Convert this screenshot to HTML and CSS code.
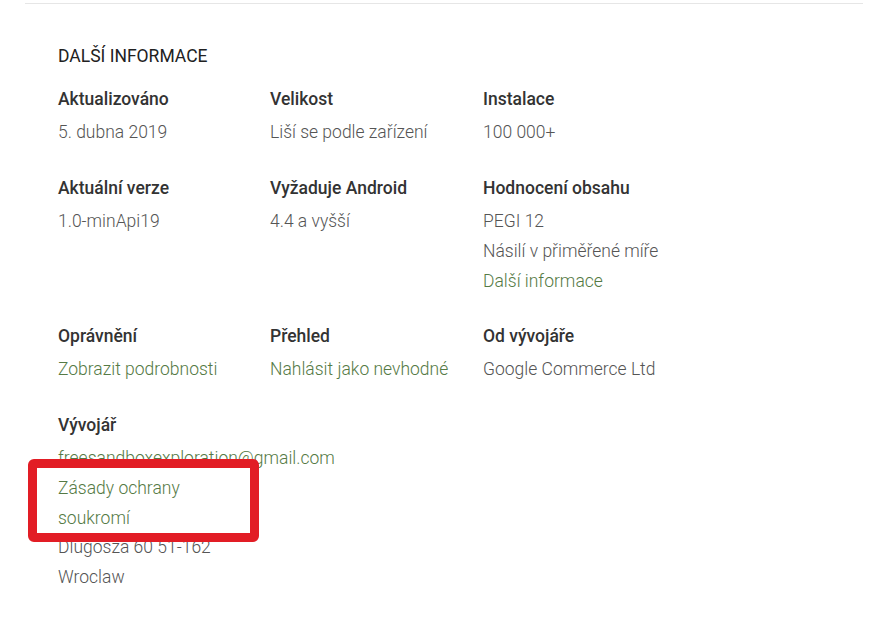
FILE: index.html
```html
<!DOCTYPE html>
<html lang="cs">
<head>
    <meta charset="UTF-8">
    <meta name="viewport" content="width=device-width, initial-scale=1.0">
    <title>Další informace</title>
    <link rel="stylesheet" href="styles.css">
</head>
<body>
    <div class="section">
        <h2 class="section-title">DALŠÍ INFORMACE</h2>

        <div class="info-grid">
            <div class="info-item">
                <div class="info-label">Aktualizováno</div>
                <div class="info-value">5. dubna 2019</div>
            </div>
            <div class="info-item">
                <div class="info-label">Velikost</div>
                <div class="info-value">Liší se podle zařízení</div>
            </div>
            <div class="info-item">
                <div class="info-label">Instalace</div>
                <div class="info-value">100 000+</div>
            </div>

            <div class="info-item">
                <div class="info-label">Aktuální verze</div>
                <div class="info-value">1.0-minApi19</div>
            </div>
            <div class="info-item">
                <div class="info-label">Vyžaduje Android</div>
                <div class="info-value">4.4 a vyšší</div>
            </div>
            <div class="info-item">
                <div class="info-label">Hodnocení obsahu</div>
                <div class="info-value">PEGI 12</div>
                <div class="info-value">Násilí v přiměřené míře</div>
                <a class="info-value link" href="#">Další informace</a>
            </div>

            <div class="info-item">
                <div class="info-label">Oprávnění</div>
                <a class="info-value link" href="#">Zobrazit podrobnosti</a>
            </div>
            <div class="info-item">
                <div class="info-label">Přehled</div>
                <a class="info-value link" href="#">Nahlásit jako nevhodné</a>
            </div>
            <div class="info-item">
                <div class="info-label">Od vývojáře</div>
                <div class="info-value">Google Commerce Ltd</div>
            </div>

            <div class="info-item">
                <div class="info-label">Vývojář</div>
                <a class="info-value link nowrap" href="#">freesandboxexploration@gmail.com</a>
                <!-- red annotation box around the privacy link -->
                <a class="info-value link highlight" href="#">Zásady ochrany soukromí</a>
                <div class="info-value">Dlugosza 60 51-162</div>
                <div class="info-value">Wroclaw</div>
            </div>
        </div>
    </div>
</body>
</html>
```

FILE: styles.css
```css
body {
    margin: 0;
    background: #fff;
    font-family: Roboto, "Noto Sans", Arial, sans-serif;
    color: #333;
}

.section {
    margin: 3px 30px 0 25px;
    border-top: 1px solid #e6e6e6;
    padding: 0 33px;
}

.section-title {
    margin: 40px 0 0;
    font-size: 17.5px;
    font-weight: 400;
    line-height: 24px;
    color: #212121;
}

.info-grid {
    display: grid;
    grid-template-columns: 212px 213px 213px;
    row-gap: 28.5px;
    margin-top: 19px;
}

.info-label {
    font-size: 17.5px;
    font-weight: 500;
    line-height: 24px;
    color: #333;
    margin-bottom: 6px;
}

.info-value {
    display: block;
    font-family: "Roboto Light", Roboto, "Noto Sans", Arial, sans-serif;
    font-size: 17.5px;
    font-weight: 300;
    line-height: 30px;
    color: #555;
    text-decoration: none;
}

.link {
    color: #557a45;
}

.nowrap {
    white-space: nowrap;
}

/* Annotation box: sits over the email line above it */
.highlight {
    position: relative;
    width: 150px;
    margin: -14px 0 -10px -30px;
    padding: 5px 42px 0 21px;
    border: 9px solid #e21d25;
    border-radius: 6px;
    background: #fff;
}
```
